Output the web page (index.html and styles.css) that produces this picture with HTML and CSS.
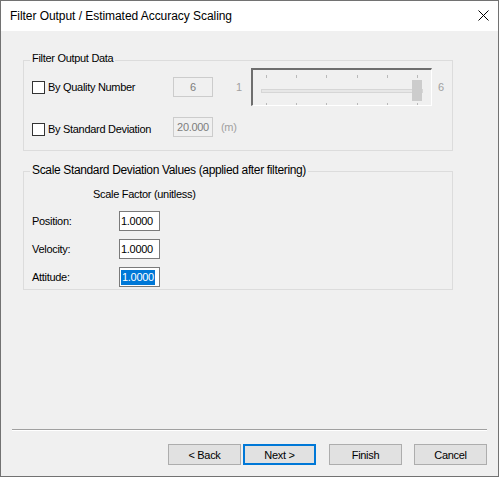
FILE: index.html
```html
<!DOCTYPE html>
<html>
<head>
<meta charset="utf-8">
<link rel="stylesheet" href="styles.css">
</head>
<body>
<div class="window">
  <div class="titlebar">
    <span class="title">Filter Output / Estimated Accuracy Scaling</span>
    <svg class="close" width="11" height="11" viewBox="0 0 11 11"><path d="M0.5 0.5 L10.5 10.5 M10.5 0.5 L0.5 10.5" stroke="#000" stroke-width="1" fill="none"/></svg>
  </div>
  <div class="content">
    <div class="group g1">
      <div class="group-title">Filter Output Data</div>
      <div class="row r1">
        <label class="check"><span class="box"></span><span>By Quality Number</span></label>
        <div class="tb disabled">6</div>
        <span class="dim min">1</span>
        <div class="slider">
          <div class="ticks"><i></i><i></i><i></i><i></i><i></i><i></i></div>
          <div class="track"></div>
          <div class="ticks bottom"><i></i><i></i><i></i><i></i><i></i><i></i></div>
          <div class="thumb"></div>
        </div>
        <span class="dim max">6</span>
      </div>
      <div class="row r2">
        <label class="check low"><span class="box"></span><span>By Standard Deviation</span></label>
        <div class="tb disabled">20.000</div>
        <span class="dim unit">(m)</span>
      </div>
    </div>
    <div class="group g2">
      <div class="group-title big">Scale Standard Deviation Values (applied after filtering)</div>
      <div class="col-head">Scale Factor (unitless)</div>
      <div class="field"><span class="flabel">Position:</span><div class="tb">1.0000</div></div>
      <div class="field"><span class="flabel">Velocity:</span><div class="tb">1.0000</div></div>
      <div class="field"><span class="flabel">Attitude:</span><div class="tb"><span class="sel">1.0000</span></div></div>
    </div>
    <div class="footer">
      <div class="sep"></div>
      <div class="buttons">
        <button class="btn">&lt; Back</button>
        <button class="btn default">Next &gt;</button>
        <button class="btn finish">Finish</button>
        <button class="btn cancel">Cancel</button>
      </div>
    </div>
  </div>
</div>
</body>
</html>
```
FILE: styles.css
```css
html, body {
  margin: 0;
  padding: 0;
  background: #fff;
}
.window {
  width: 499px;
  height: 477px;
  box-sizing: border-box;
  border: 1px solid #727272;
  display: flex;
  flex-direction: column;
  font-family: "Liberation Sans", Arial, sans-serif;
  font-size: 11px;
  line-height: 13px;
  letter-spacing: -0.3px;
  color: #000;
}
.titlebar {
  height: 30px;
  background: #fff;
  display: flex;
  align-items: center;
  padding-left: 9px;
  flex: none;
}
.title {
  font-size: 12px;
  letter-spacing: -0.05px;
  line-height: 14px;
  flex: 1;
}
.close {
  display: block;
  margin-right: 9px;
  margin-top: -1px;
}
.content {
  flex: 1;
  background: #f0f0f0;
  display: flex;
  flex-direction: column;
}
.group {
  margin-left: 22px;
  width: 430px;
  box-sizing: border-box;
  border: 1px solid #dcdcdc;
  padding-left: 8px;
}
.g1 {
  margin-top: 29px;
  padding-bottom: 13px;
}
.g2 {
  margin-top: 20px;
  padding-bottom: 2px;
}
.group-title {
  margin: -9px 0 0 -2px;
  padding: 0 2px;
  width: max-content;
  background: #f0f0f0;
}
.group-title.big {
  margin-top: -8px;
  font-size: 12px;
  letter-spacing: -0.35px;
}
.row {
  display: flex;
  align-items: center;
}
.r1 {
  margin-top: 3px;
  height: 38px;
}
.r2 {
  margin-top: 11px;
  height: 20px;
}
.check {
  width: 141px;
  display: flex;
  align-items: center;
  flex: none;
}
.check.low {
  margin-top: 5px;
}
.box {
  width: 13px;
  height: 13px;
  box-sizing: border-box;
  border: 1px solid #333;
  background: #fff;
  margin-right: 3px;
  flex: none;
}
.tb {
  width: 41px;
  height: 20px;
  box-sizing: border-box;
  border: 1px solid #7a7a7a;
  background: #fff;
  padding-left: 1px;
  display: flex;
  align-items: center;
  flex: none;
}
.tb.disabled {
  width: 40px;
  border-color: #cccccc;
  background: #f0f0f0;
  color: #7d7d7d;
  justify-content: center;
  padding-left: 0;
}
.dim {
  color: #a0a0a0;
  flex: none;
}
.min {
  margin-left: 23px;
  width: 15px;
}
.max {
  margin-left: 6px;
}
.unit {
  margin-left: 8px;
}
.slider {
  position: relative;
  width: 181px;
  height: 38px;
  box-sizing: border-box;
  border-style: solid;
  border-width: 2px 1px 1px 2px;
  border-color: #6e6e6e #fff #fff #6e6e6e;
  display: flex;
  flex-direction: column;
  flex: none;
}
.ticks {
  margin: 5px 0 0 13px;
  width: 152px;
  height: 3px;
  display: flex;
  justify-content: space-between;
}
.ticks i {
  width: 1px;
  height: 100%;
  background: #b9b9b9;
}
.ticks.bottom {
  margin-top: 10px;
  height: 2px;
}
.track {
  margin: 11px 0 0 8px;
  width: 162px;
  height: 4px;
  box-sizing: border-box;
  border: 1px solid #d6d6d6;
  background: #e7e7e7;
}
.thumb {
  position: absolute;
  left: 159px;
  top: 10px;
  width: 10px;
  height: 21px;
  background: #cccccc;
}
.col-head {
  margin: 11px 0 0 61px;
}
.field {
  display: flex;
  align-items: center;
  height: 20px;
  margin-top: 8px;
}
.col-head + .field {
  margin-top: 10px;
}
.flabel {
  width: 87px;
  flex: none;
}
.sel {
  display: inline-block;
  background: #0078d7;
  color: #fff;
  line-height: 15px;
  padding: 0 1px;
}
.footer {
  margin-top: auto;
}
.sep {
  margin: 0 11px;
  border-top: 1px solid #a0a0a0;
  border-bottom: 1px solid #fff;
}
.buttons {
  margin-top: 13px;
  padding: 0 11px 11px 0;
  display: flex;
  justify-content: flex-end;
}
.btn {
  width: 73px;
  height: 21px;
  box-sizing: border-box;
  margin: 0;
  padding: 0;
  border: 1px solid #adadad;
  background: #e1e1e1;
  font-family: "Liberation Sans", Arial, sans-serif;
  font-size: 11px;
  letter-spacing: -0.3px;
  color: #000;
}
.btn.default {
  margin-left: 2px;
  border: 2px solid #0078d7;
}
.btn.finish {
  margin-left: 13px;
}
.btn.cancel {
  margin-left: 12px;
}
```
